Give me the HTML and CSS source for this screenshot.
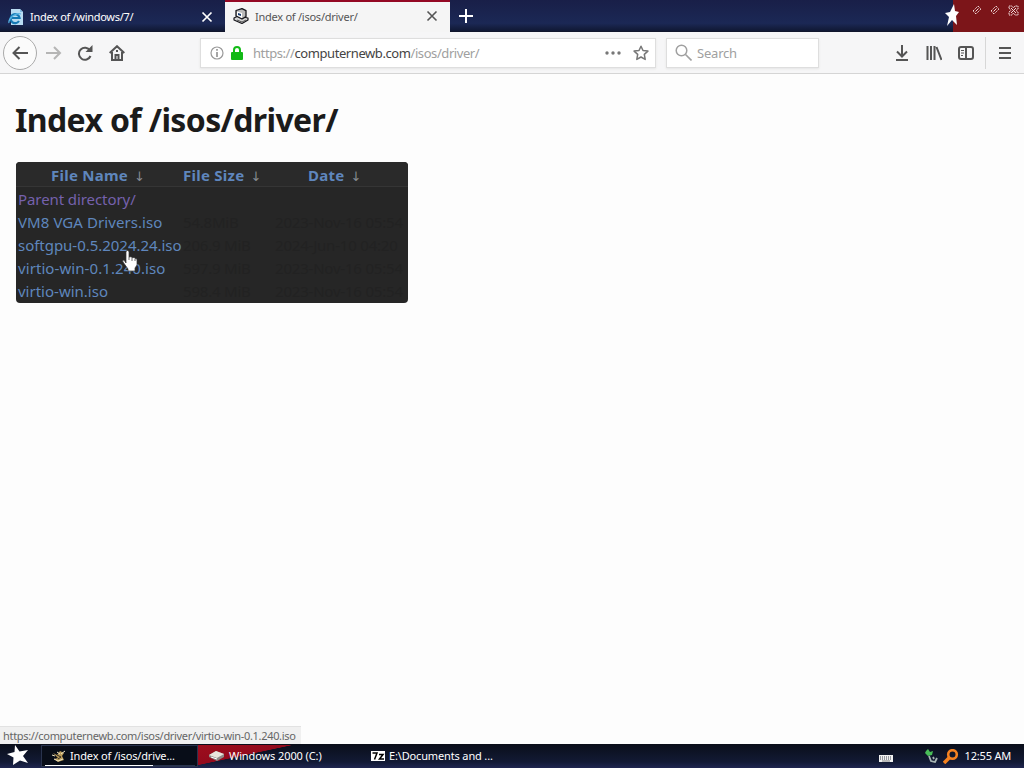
FILE: index.html
```html
<!DOCTYPE html>
<html lang="en">

    <head>
        <meta charset="UTF-8">
        <meta name="viewport" content="width=device-width, initial-scale=1.0">
        <title>Index of /isos/driver/</title>
        <link rel="stylesheet" href="styles.css">
    </head>

    <body>
        <div class="tabbar">
            <div class="tab">
                <svg class="tab__icon" width="16" height="16" viewBox="0 0 16 16">
                    <path d="M3 0h9l3 3v13H3z" fill="#b9dcf2" />
                    <path d="M12 0v3h3" fill="#7fb8df" />
                    <path d="M11 12a4.500 4.500 0 1 1 .6-3H4" fill="none" stroke="#1679b4" stroke-width="2.2" />
                    <path d="M1 14C0 10 7 3 13 5" fill="none" stroke="#55b3e5" stroke-width="1.2" />
                </svg>
                <span class="tab__title tab__title--first">Index of /windows/7/</span>
                <svg class="tab__close" width="12" height="12" viewBox="0 0 12 12"><path d="M1.5 1.5l9 9m0-9l-9 9" stroke="#fff" stroke-width="1.7" /></svg>
            </div>
            <div class="tab tab--active">
                <svg class="tab__icon" width="16" height="16" viewBox="0 0 16 16" stroke-linejoin="round">
                    <path d="M1 10l4-2 10 2v2l-6 3.500L1 12z" fill="#d6d6d6" stroke="#17171c" stroke-width="1.200" />
                    <path d="M3 2.500L9 .6l4 2v6L9 11 3 8z" fill="#bbb" stroke="#17171c" stroke-width="1.300" />
                    <path d="M4 3.500l5 1.500v5L4 7.500z" fill="#fff" />
                    <path d="M5 5l3 1v2L5 7z" fill="#173b70" />
                    <path d="M4 12l5 2 4-2" fill="none" stroke="#555" />
                </svg>
                <span class="tab__title tab__title--second">Index of /isos/driver/</span>
                <svg class="tab__close" width="12" height="12" viewBox="0 0 12 12"><path d="M1.5 1.5l9 9m0-9l-9 9" stroke="#555" stroke-width="1.6" /></svg>
            </div>
            <svg class="tabbar__new" width="14" height="14" viewBox="0 0 14 14"><path d="M7 0v14M0 7h14" stroke="#fff" stroke-width="2" /></svg>
            <div class="caption">
                <svg width="80" height="32" viewBox="0 0 80 32">
                    <path d="M9 0h71v32H9z" fill="#7c1519" />
                    <path d="M10 4l1 7 4 1-3 4 1 9-5-5-5 6 2-9-4-4 5-1z" fill="#fff" />
                    <g fill="none" stroke="#f0dcdc">
                        <path d="M29 11l5-5 3 3-5 5zM47 11l5-5 3 3-5 5z" stroke-dasharray="1.500 .8" />
                        <path d="M31.500 11.500l3-3M49.500 11.500l3-3" />
                        <path d="M67 8l5 5m0-5l-5 5" />
                        <path d="M65 8V6h3l1.500 2L71 6h3v3l-2 1.500 2 1.500v3h-3l-1.500-2-1.500 2h-3v-3l2-1.500z" stroke-dasharray="1.500 .6" />
                    </g>
                </svg>
            </div>
        </div>

        <div class="toolbar">
            <button class="back" aria-label="Back">
                <svg width="18" height="18" viewBox="0 0 18 18"><path d="M17 9H2M8.500 3L2.500 9l6 6" /></svg>
            </button>
            <svg class="icon icon--disabled" width="16" height="16" viewBox="0 0 16 16"><path d="M0 8h14M8 2l6 6-6 6" /></svg>
            <svg class="icon icon--reload" width="16" height="16" viewBox="0 0 16 16"><path d="M13 5.500A6 6 0 1 0 13.500 11" /><path class="solid" d="M15.500 0v7H8.500z" /></svg>
            <svg class="icon icon--home" width="16" height="16" viewBox="0 0 16 16"><path d="M.7 8L8 1.200 15.300 8M3 7v8h10V7M6.500 15v-5h3v5" /><path class="solid" d="M7 5h2v2H7z" /></svg>
            <div class="urlbar">
                <svg width="14" height="14" viewBox="0 0 14 14"><circle cx="7" cy="7" r="6" fill="none" stroke="#999" stroke-width="1.200" /><path d="M7 6v5M7 3v1.700" stroke="#888" stroke-width="1.500" /></svg>
                <svg class="urlbar__lock" width="12" height="14" viewBox="0 0 12 14"><path d="M3 7V4a3 3 0 0 1 6 0v3" fill="none" stroke="#12bc16" stroke-width="2" /><rect y="6" width="12" height="8" rx="1" fill="#12b916" /></svg>
                <span class="urlbar__text">https://<b>computernewb.com</b>/isos/driver/</span>
                <svg class="urlbar__more" width="16" height="4" viewBox="0 0 16 4" fill="#777"><circle cx="2" cy="2" r="1.700" /><circle cx="8" cy="2" r="1.700" /><circle cx="14" cy="2" r="1.700" /></svg>
                <svg class="urlbar__star" width="16" height="16" viewBox="0 0 16 16"><path d="M8 1.200l2 4.300 4.900.6-3.600 3.300.9 5L8 12l-4.200 2.400.9-5L1.100 6.100 6 5.500z" fill="none" stroke="#777" stroke-width="1.500" stroke-linejoin="round" /></svg>
            </div>
            <div class="search">
                <svg width="17" height="17" viewBox="0 0 17 17"><circle cx="6.500" cy="6.500" r="5.300" fill="none" stroke="#a0a0a0" stroke-width="1.500" /><path d="M10.500 10.500l6 6" stroke="#a0a0a0" stroke-width="1.600" /></svg>
                <span>Search</span>
            </div>
            <div class="tools">
                <svg class="icon" width="16" height="16" viewBox="0 0 16 16"><path d="M8 0v11M3 6.500L8 11.500l5-5M2 15h12" /></svg>
                <svg class="icon" width="16" height="16" viewBox="0 0 16 16"><path d="M1.500 1v14M5 1v14M8.500 1v14M10.500 2l5 13" /></svg>
                <svg class="icon" width="16" height="16" viewBox="0 0 16 16"><rect x="1" y="2" width="14" height="12" rx="2" /><path d="M8 2v12" /><path d="M3 5.500h3M3 8h3M3 10.500h2" stroke-width="1" /></svg>
                <div class="tools__line"></div>
                <svg class="icon" width="14" height="16" viewBox="0 0 14 16"><path d="M1 3h12M1 8h12M1 13h12" /></svg>
            </div>
        </div>

        <main class="page">
            <h1>Index of /isos/driver/</h1>
            <table class="listing">
                <thead>
                    <tr>
                        <th class="col-name"><a>File Name</a><i>↓</i></th>
                        <th class="col-size"><a>File Size</a><i>↓</i></th>
                        <th class="col-date"><a>Date</a><i>↓</i></th>
                    </tr>
                </thead>
                <tbody>
                    <tr><td><a class="visited">Parent directory/</a></td><td></td><td></td></tr>
                    <tr><td><a class="wide">VM8 VGA Drivers.iso</a></td><td>54.8MiB</td><td>2023-Nov-16 05:54</td></tr>
                    <tr><td><a class="tight">softgpu-0.5.2024.24.iso</a></td><td>206.9 MiB</td><td>2024-Jun-10 04:20</td></tr>
                    <tr><td><a class="wide">virtio-win-0.1.240.iso</a></td><td>597.9 MiB</td><td>2023-Nov-16 05:54</td></tr>
                    <tr><td><a>virtio-win.iso</a></td><td>598.4 MiB</td><td>2023-Nov-16 05:54</td></tr>
                </tbody>
            </table>
            <svg class="cursor" width="16" height="22" viewBox="0 0 16 22"><path d="M4 13V2q0-1.500 1.500-1.500T7 2v5l2-.3 1 1 2-.2 1 1 2 .5v6l-2 3v3H6v-2L1 12q-1-2 1-2z" fill="#fff" stroke="#333" stroke-width=".7" /><path d="M7 7v3M10 8v3M13 9v2" stroke="#444" stroke-width=".8" /></svg>
            <div class="status"><span>https://computernewb.com/isos/driver/virtio-win-0.1.240.iso</span></div>
        </main>

        <div class="taskbar">
            <svg class="start" width="22" height="22" viewBox="0 0 22 22"><path d="M8 0l4.500 6.500 8.500-1.500-5 6 5 7-8-2.500L6 20l.5-7.500L0 9l7.500-2z" fill="#fff" /></svg>
            <div class="task task--active">
                <svg width="16" height="14" viewBox="0 0 16 14"><path d="M2 4l4 2 3-4 4 2-2 3 2 4-6 2-4-3 4-1z" fill="#b89a58" /><path d="M1 6l3 1M6 3l3 2M10 5l4-3M3 10l4 2 5-2" stroke="#eee5c4" fill="none" /><path d="M6 6l4 2-3 2" stroke="#332d25" fill="none" /></svg>
                <span class="task__one">Index of /isos/drive...</span>
            </div>
            <div class="task task--red">
                <svg width="16" height="12" viewBox="0 0 16 12"><path d="M0 5l7-4 8 3v3l-7 4-8-4z" fill="#8e8b88" /><path d="M0 5l7-4 8 3-7 4z" fill="#e9e5dc" /><path d="M2 7l6 2" stroke="#fff" /></svg>
                <span class="task__two">Windows 2000 (C:)</span>
            </div>
            <div class="task">
                <svg width="14" height="10" viewBox="0 0 14 10"><path d="M0 0h14v10H0z" fill="#fff" /><path d="M1.500 2H6L3.500 8.500M8 3.500h4L8.500 8H13" fill="none" stroke="#000" stroke-width="1.500" /></svg>
                <span class="task__three">E:\Documents and ...</span>
            </div>
            <div class="tray">
                <svg class="keyboard" width="14" height="7" viewBox="0 0 14 7"><path d="M0 0h14v7H0z" fill="#f1f1f1" /><path d="M1 2h12M1 4h12" stroke="#3d4350" stroke-dasharray="1 1" /><path d="M3 6h8" stroke="#555" stroke-width=".7" /></svg>
                <svg class="usb" width="14" height="14" viewBox="0 0 14 14"><path d="M1 2l2-2 2 3 3-1-1 4-4 1-3-3z" fill="#49bd58" /><path d="M4 7l2 5 4 1 2-4M8 8l1 2" fill="none" stroke="#a8b5b5" stroke-width="1.800" /></svg>
                <svg width="16" height="15" viewBox="0 0 16 15"><circle cx="9.500" cy="5.500" r="4.300" fill="none" stroke="#f58220" stroke-width="2.600" /><path d="M6.500 8.500L1 14" stroke="#f58220" stroke-width="3.500" /></svg>
                <span class="clock">12:55 AM</span>
            </div>
        </div>
    </body>

</html>
```
FILE: styles.css
```css
* {
    margin: 0;
    padding: 0;
    box-sizing: border-box;
}

body {
    display: flex;
    flex-direction: column;
    width: 1024px;
    height: 768px;
    overflow: hidden;
    background: #fdfdfd;
    font-family: "Noto Sans", sans-serif;
    color: #1b1b1b;
}

svg {
    display: block;
    flex-shrink: 0;
}

span,
a {
    white-space: nowrap;
}

/* Tabs */
.tabbar {
    display: flex;
    align-items: center;
    height: 32px;
    background: linear-gradient(#191f48, #1b2855 75%, #101833);
    border-bottom: 1px solid #11162c;
    font-size: 11px;
}

.tab {
    display: flex;
    align-items: center;
    width: 225px;
    height: 32px;
    padding: 2px 10px 0 8px;
    color: #fff;
}

.tab--active {
    height: 33px;
    padding: 0 10px 2px 8px;
    background: #f5f5f5;
    border-top: 3px solid #940824;
    color: #555;
}

.tab__title {
    margin-left: 6px;
}

.tab__title--first {
    letter-spacing: -0.3px;
}

.tab__title--second {
    letter-spacing: -0.25px;
}

.tab__close {
    margin-left: auto;
    margin-right: 2px;
}

.tabbar__new {
    margin-left: 9px;
}

.caption {
    margin-left: auto;
}

/* Navigation */
.toolbar {
    display: flex;
    align-items: center;
    height: 42px;
    padding: 0 12px 0 3px;
    background: #f6f6f7;
    border-bottom: 1px solid #d5d5d5;
}

.back {
    display: grid;
    place-items: center;
    width: 34px;
    height: 34px;
    border: 1px solid #aaa;
    border-radius: 50%;
    background: #fbfbfb;
}

.icon,
.back svg {
    fill: none;
    stroke: #555;
    stroke-width: 2;
}

.icon--disabled {
    margin-left: 9px;
    stroke: #b5b5b5;
}

.icon--reload {
    margin-left: 15px;
}

.icon--home {
    margin-left: 16px;
}

.icon .solid {
    fill: #555;
    stroke: none;
}

.urlbar,
.search {
    display: flex;
    align-items: center;
    height: 30px;
    background: #fff;
    border: 1px solid #dedede;
    box-shadow: 0 1px 2px #e5e5e5;
    font-size: 13px;
    color: #a0a0a0;
}

.urlbar {
    width: 456px;
    margin-left: 75px;
    padding: 0 6px 0 9px;
}

.urlbar__lock {
    margin-left: 7px;
}

.urlbar__text {
    margin-left: 10px;
    letter-spacing: -0.42px;
}

.urlbar b {
    font-weight: 400;
    color: #444;
}

.urlbar__more {
    margin-left: auto;
}

.urlbar__star {
    margin-left: 12px;
}

.search {
    width: 153px;
    margin-left: 10px;
    padding-left: 8px;
    gap: 5px;
    letter-spacing: -0.2px;
}

.tools {
    display: flex;
    align-items: center;
    gap: 16px;
    margin-left: auto;
}

.tools__line {
    width: 1px;
    height: 32px;
    margin: 0 -4px 0 -5px;
    background: #d7d7d7;
}

/* Directory listing */
.page {
    position: relative;
    height: 670px;
    padding: 22px 16px;
}

h1 {
    height: 48px;
    margin-left: -1px;
    font-size: 32px;
    line-height: 48px;
    letter-spacing: -0.63px;
    white-space: nowrap;
}

.listing {
    width: 392px;
    margin-top: 18px;
    table-layout: fixed;
    border-spacing: 0;
    background: #262626;
    border-radius: 4px;
    font-size: 15px;
    color: #222;
}

.listing th {
    height: 25px;
    padding-top: 2px;
    line-height: 22px;
    border-bottom: 1px solid #353535;
    background: #2a2a2a;
    text-align: left;
}

.listing th:first-child {
    border-top-left-radius: 4px;
}

.listing th:last-child {
    border-top-right-radius: 4px;
}

.listing td {
    height: 23px;
    padding: 0 0 1px 2px;
    line-height: 22px;
    white-space: nowrap;
    letter-spacing: -0.2px;
}

.listing tr:first-child td {
    height: 24px;
    padding-top: 1px;
}

.listing a {
    color: #5f86bd;
    letter-spacing: 0;
}

.listing th a {
    letter-spacing: 0.25px;
}

.listing .visited {
    color: #7561ad;
    letter-spacing: -0.08px;
}

.listing .wide {
    letter-spacing: 0.08px;
}

.listing .tight {
    letter-spacing: -0.03px;
}

.listing i {
    margin-left: 6px;
    color: #858b92;
    font: 13px "DejaVu Sans", sans-serif;
}

.col-name {
    width: 165px;
    padding-left: 35px;
}

.col-size {
    width: 92px;
    padding-left: 2px;
}

.col-date {
    padding-left: 35px;
}

.cursor {
    position: absolute;
    left: 122px;
    top: 176px;
}

.status {
    position: absolute;
    left: 0;
    bottom: 0;
    width: 301px;
    height: 18px;
    padding-left: 3px;
    background: #f0f0f0;
    border-top: 1px solid #e2e2e2;
    font-size: 11px;
    line-height: 18px;
    letter-spacing: -0.32px;
    color: #666;
}

/* Desktop taskbar */
.taskbar {
    display: flex;
    align-items: center;
    height: 24px;
    padding: 0 13px 0 7px;
    background: linear-gradient(#0a0e1a, #121a35 75%, #1f2650);
    color: #fff;
    font-size: 11px;
}

.taskbar span {
    position: relative;
    top: -1px;
}

.start {
    margin-right: 12px;
}

.task {
    display: flex;
    align-items: center;
    width: 160px;
    height: 22px;
    padding-left: 10px;
    gap: 4px;
}

.task--active {
    width: 157px;
    padding-left: 9px;
    gap: 3px;
    border: 1px solid #29334d;
    background: linear-gradient(90deg, #fff 72%, #29334d 72%) 3px 100% / 150px 1px no-repeat, #080d18;
}

.task--red {
    width: 163px;
    padding-left: 11px;
    background: linear-gradient(168deg, #9d0e1d 0, #930a1c 35%, transparent 36%);
}

.task__one,
.task__three {
    letter-spacing: -0.15px;
}

.task__two {
    letter-spacing: -0.1px;
}

.tray {
    display: flex;
    align-items: center;
    margin-left: auto;
}

.keyboard {
    margin: 5px 32px 0 0;
}

.usb {
    margin-right: 4px;
}

.clock {
    margin-left: 6px;
    letter-spacing: -0.2px;
}
```
